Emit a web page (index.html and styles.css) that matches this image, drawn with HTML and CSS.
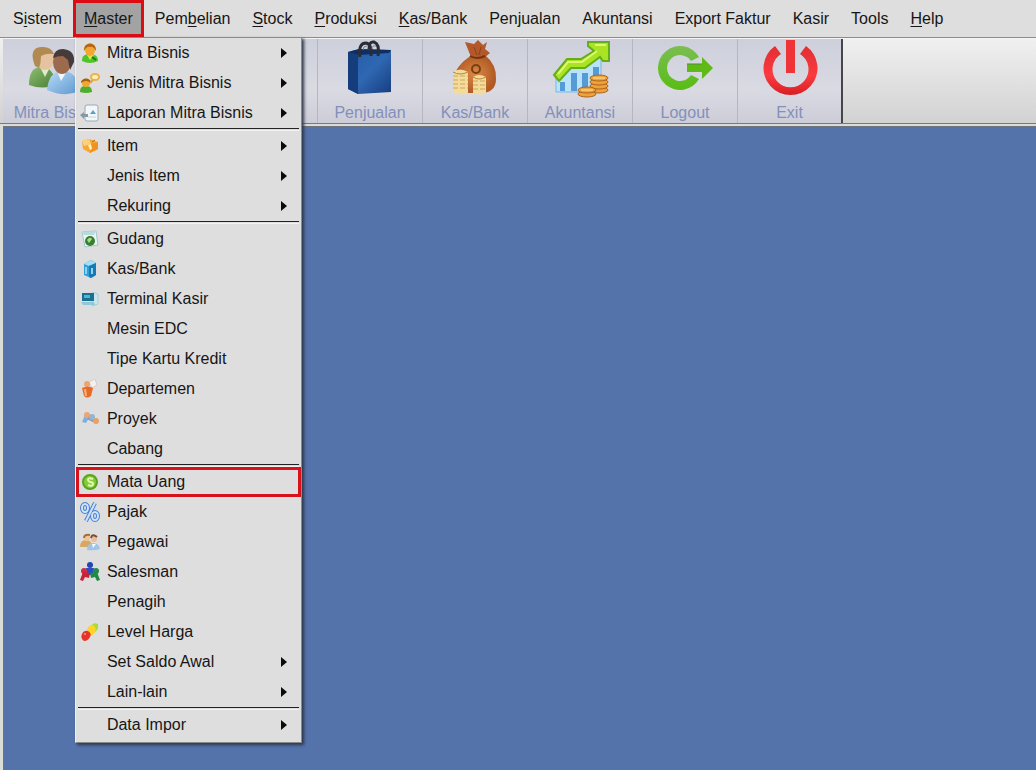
FILE: index.html
```
<!DOCTYPE html>
<html lang="id">
<head>
<meta charset="utf-8">
<meta name="viewport" content="width=device-width, initial-scale=1">
<title>Master</title>
<link rel="stylesheet" href="styles.css">
</head>
<body>

<nav class="menubar">
  <ul class="menus">
    <li><button class="menu">S<u>i</u>stem</button></li>
    <li class="open">
      <button class="menu active"><u>M</u>aster</button>
      <ul class="dropdown">
        <li><button class="entry sub">
          <svg class="icon" viewBox="0 0 20 20"><path d="M2 18c0-5 2-7 8-7s8 3 8 7q-8 4-16 0z" fill="#4fc32c"/><path d="M7 12l3 5 4-5z" fill="#d8e84a"/><ellipse cx="10" cy="7" rx="5" ry="6" fill="#f2a830"/><path d="M4 8C3-2 17-2 16 8q-3-5-6-4-3-1-6 4z" fill="#b8670f"/><path d="M12 14l4 3" stroke="#24791b" stroke-width="2"/></svg>
          Mitra Bisnis</button></li>
        <li><button class="entry sub">
          <svg class="icon" viewBox="0 0 20 20"><path d="M0 19c0-5 2-6 6-6s6 2 6 6q-6 2-12 0z" fill="#4fae2c"/><circle cx="6" cy="10" r="4" fill="#f2a830"/><path d="M1 10c0-6 10-6 10 0q-5-4-10 0z" fill="#a85e10"/><path d="M10 10l3-3" stroke="#e0a23c" stroke-width="2"/><ellipse cx="15" cy="4" rx="4" ry="3" fill="#fff0b8" stroke="#eeb04c" stroke-width="2"/></svg>
          Jenis Mitra Bisnis</button></li>
        <li><button class="entry sub">
          <svg class="icon" viewBox="0 0 20 20"><rect x="5" y="2" width="13" height="16" rx="2" fill="#f2f7fa" stroke="#9aa9b4"/><path d="M10 11l3-4 3 4z" fill="#5ba0c4"/><path d="M8 14h8" stroke="#c4d6e0"/><path d="M0 12l4-3v2h4v3H4v2z" fill="#8898a6"/></svg>
          Laporan Mitra Bisnis</button></li>
        <li class="line"></li>
        <li><button class="entry sub">
          <svg class="icon" viewBox="0 0 20 20"><path d="M2 5l7-2 9 3v7l-8 4-7-4z" fill="#f7a734"/><path d="M2 5l7-2 2 5-7 2z" fill="#ffd07a"/><path d="M11 8l7-2v7l-8 4z" fill="#f0921c"/><path d="M8 9l3-1 1 5-2 1z" fill="#fff0c4"/><path d="M12 6l3-2" stroke="#b75f10"/></svg>
          Item</button></li>
        <li><button class="entry sub"><span class="icon"></span>Jenis Item</button></li>
        <li><button class="entry sub"><span class="icon"></span>Rekuring</button></li>
        <li class="line"></li>
        <li><button class="entry">
          <svg class="icon" viewBox="0 0 20 20"><path d="M2 3l14-1 2 14-13 2z" fill="#eaf6f6" stroke="#9fc9cc"/><path d="M2 3l14-1-2 4H4z" fill="#b6dce2"/><circle cx="10" cy="12" r="5" fill="#3a7d34"/><path d="M7 11q3-4 5-1l-3 4z" fill="#a7df82"/></svg>
          Gudang</button></li>
        <li><button class="entry">
          <svg class="icon" viewBox="0 0 20 20"><path d="M4 5l7-4 5 3v12l-5 3-7-3z" fill="#2f9fd8"/><path d="M4 5l7-4 5 3-7 3z" fill="#a6def5"/><path d="M9 7l7-3v12l-5 3-2-1z" fill="#1778b4"/><path d="M6 8v7M12 9v6" stroke="#8fd3f2" stroke-width="2"/></svg>
          Kas/Bank</button></li>
        <li><button class="entry">
          <svg class="icon" viewBox="0 0 20 20"><path d="M12 3l6 2v10l-6 2z" fill="#c9e6ee" stroke="#a9cfda"/><rect x="2" y="4" width="12" height="8" fill="#1b6f8f"/><rect x="4" y="6" width="6" height="3" fill="#48b9d6"/><path d="M1 13h13l1 3H3z" fill="#8fc8d9"/></svg>
          Terminal Kasir</button></li>
        <li><button class="entry"><span class="icon"></span>Mesin EDC</button></li>
        <li><button class="entry"><span class="icon"></span>Tipe Kartu Kredit</button></li>
        <li><button class="entry">
          <svg class="icon" viewBox="0 0 20 20"><path d="M9 3l6-3 2 6-5 3z" fill="#f6f1ee" stroke="#d9cdc6"/><circle cx="7" cy="5" r="3" fill="#efa56c"/><path d="M2 9q6-3 11 0l-2 8q-4 3-7 0z" fill="#e86a26"/><path d="M5 10l1 7" stroke="#ffb27a" stroke-width="2"/></svg>
          Departemen</button></li>
        <li><button class="entry">
          <svg class="icon" viewBox="0 0 20 20"><path d="M2 13l3-7 4 3-3 5z" fill="#7fb0dc"/><circle cx="7" cy="6" r="3" fill="#e9a873"/><path d="M8 9l6 3" stroke="#8c98ac" stroke-width="3"/><circle cx="12" cy="8" r="3" fill="#95b4d4"/><circle cx="16" cy="12" r="3" fill="#e6a068"/></svg>
          Proyek</button></li>
        <li><button class="entry"><span class="icon"></span>Cabang</button></li>
        <li class="line"></li>
        <li><button class="entry marked">
          <svg class="icon" viewBox="0 0 20 20"><circle cx="10" cy="10" r="7" fill="#86cc38" stroke="#5aa41e" stroke-width="2"/><path d="M13 7q-5-2-5 1 0 1 2 2 3 0 3 2 0 3-5 1" fill="none" stroke="#dff8b4" stroke-width="2"/></svg>
          Mata Uang</button></li>
        <li><button class="entry">
          <svg class="icon" viewBox="0 0 20 20"><g fill="none" stroke="#4a82d0" stroke-width="4"><ellipse cx="5" cy="6" rx="3" ry="4"/><ellipse cx="15" cy="14" rx="3" ry="4"/><path d="M15 1L6 19"/></g><g fill="none" stroke="#cfe4ff" stroke-width="2"><ellipse cx="5" cy="6" rx="3" ry="4"/><ellipse cx="15" cy="14" rx="3" ry="4"/><path d="M15 1L6 19"/></g></svg>
          Pajak</button></li>
        <li><button class="entry">
          <svg class="icon" viewBox="0 0 20 20"><path d="M0 15q0-7 6-7t6 7z" fill="#d8a763"/><circle cx="7" cy="6" r="3" fill="#f0c690"/><path d="M4 6q0-4 6-3" fill="none" stroke="#a96c34" stroke-width="2"/><path d="M7 18q0-7 6-7t7 6q-6 2-13 1z" fill="#9fc4e6"/><circle cx="14" cy="7" r="3" fill="#f0bd94"/><path d="M11 6q1-5 6-1" fill="none" stroke="#74503e" stroke-width="2"/><path d="M12 12l1 4 3-4z" fill="#f8fbff"/></svg>
          Pegawai</button></li>
        <li><button class="entry">
          <svg class="icon" viewBox="0 0 20 20"><circle cx="10" cy="3" r="3" fill="#2346b4"/><path d="M6 6h8l-1 7H7z" fill="#2b4fc0"/><circle cx="4" cy="9" r="3" fill="#d02c40"/><path d="M0 18l3-8 7 1-1 5-4-1-2 4z" fill="#c62238"/><circle cx="16" cy="9" r="3" fill="#25884c"/><path d="M20 18l-3-8-7 1 1 5 4-1 2 4z" fill="#1f8a46"/></svg>
          Salesman</button></li>
        <li><button class="entry"><span class="icon"></span>Penagih</button></li>
        <li><button class="entry">
          <svg class="icon" viewBox="0 0 20 20"><path d="M11 4q2-4 7-2 1 5-3 8z" fill="#a4dc3c"/><path d="M7 8q1-5 6-5 4 2 2 7-2 4-6 4z" fill="#ffd428"/><path d="M2 12q2-4 6-3 4 2 2 6-2 4-6 4-4-3-2-7z" fill="#e8332a"/><circle cx="5" cy="12" r="1" fill="#ff9d8a"/></svg>
          Level Harga</button></li>
        <li><button class="entry sub"><span class="icon"></span>Set Saldo Awal</button></li>
        <li><button class="entry sub"><span class="icon"></span>Lain-lain</button></li>
        <li class="line"></li>
        <li><button class="entry sub"><span class="icon"></span>Data Impor</button></li>
      </ul>
    </li>
    <li><button class="menu">Pem<u>b</u>elian</button></li>
    <li><button class="menu"><u>S</u>tock</button></li>
    <li><button class="menu"><u>P</u>roduksi</button></li>
    <li><button class="menu"><u>K</u>as/Bank</button></li>
    <li><button class="menu">Penjualan</button></li>
    <li><button class="menu">Akuntansi</button></li>
    <li><button class="menu">Export Faktur</button></li>
    <li><button class="menu">Kasir</button></li>
    <li><button class="menu">Tools</button></li>
    <li><button class="menu"><u>H</u>elp</button></li>
  </ul>
</nav>

<div class="toolbar">
  <button class="tool">
    <svg class="picture" viewBox="0 0 60 60">
      <defs>
        <linearGradient id="shirt" x2="1" y2="1"><stop stop-color="#8fc070"/><stop offset="1" stop-color="#477c35"/></linearGradient>
        <linearGradient id="coat" x2="1" y2="1"><stop stop-color="#b9dcf6"/><stop offset="1" stop-color="#5c97cf"/></linearGradient>
      </defs>
      <path d="M4 46q0-18 12-18 13 0 15 18-13 5-27 0z" fill="url(#shirt)"/>
      <path d="M15 28l5 10 5-10z" fill="#dcecc8"/>
      <ellipse cx="20" cy="20" rx="9" ry="11" fill="#e5c3a0"/>
      <path d="M10 27Q3 9 16 8q10-1 13 7-8-1-13 2 0 7-2 12z" fill="#b08a50"/>
      <path d="M22 51q2-19 15-19 16 0 17 20-14 7-32-1z" fill="url(#coat)"/>
      <path d="M32 32l4 10 6-10z" fill="#f3f8fc"/>
      <ellipse cx="37" cy="23" rx="9" ry="12" fill="#9c6a4c"/>
      <path d="M28 19q1-9 10-9 12 1 11 13l-4 8-2-10-5-4q-6 0-10 2z" fill="#463b39"/>
    </svg>
    Mitra Bisnis</button>
  <button class="tool" aria-label="Pembelian"></button>
  <button class="tool" aria-label="Stock"></button>
  <button class="tool">
    <svg class="picture" viewBox="0 0 60 60">
      <defs><linearGradient id="bag" x2="1" y2="1"><stop stop-color="#2258a4"/><stop offset=".5" stop-color="#2f68b2"/><stop offset="1" stop-color="#173d80"/></linearGradient></defs>
      <path d="M8 13l11-3 32 1v42l-33 2-10-5z" fill="url(#bag)"/>
      <path d="M8 13l10 3v39l-10-5z" fill="#153d7c"/>
      <path d="M8 13l11-3 32 1-2 3-31 2z" fill="#0f2e62"/>
      <path d="M20 18q-2-14 6-14 6 1 5 13M29 10q0-8 5-7 6 2 4 14" fill="none" stroke="#2a2d35" stroke-width="3"/>
      <path d="M23 11q0-4 4-4M32 10q0-4 4-3" fill="none" stroke="#7a808c"/>
    </svg>
    Penjualan</button>
  <button class="tool">
    <svg class="picture" viewBox="0 0 60 60">
      <defs><radialGradient id="sack"><stop stop-color="#dc8846"/><stop offset="1" stop-color="#b05a24"/></radialGradient></defs>
      <path d="M26 18L20 3l9 2 4-4 5 5 4-3-2 7 5 4-6 5z" fill="#b2582a"/>
      <path d="M27 16h13q12 10 11 24 0 12-12 14H22Q9 52 9 39q1-12 18-23z" fill="url(#sack)"/>
      <path d="M25 17q7 4 15 0" fill="none" stroke="#713310" stroke-width="2"/>
      <path d="M29 8l3 8M36 8l-2 8" fill="none" stroke="#8a421a"/>
      <circle cx="31" cy="30" r="4" fill="none" stroke="#774012" stroke-width="2"/>
      <path d="M8 33q7-5 15 0v21q-7 3-15 0zM28 38q6-4 13 0v16q-6 3-13 0z" fill="#f3dc9b"/>
      <path d="M8 37h15M8 41h15M8 45h15M8 49h15M28 42h13M28 46h13M28 50h13" stroke="#cda55a" stroke-dasharray="5 2"/>
      <path d="M8 33q7 4 15 0M28 38q6 4 13 0" stroke="#b58536" fill="none"/>
    </svg>
    Kas/Bank</button>
  <button class="tool">
    <svg class="picture" viewBox="0 0 60 60">
      <path d="M6 34L51 18v35H6z" fill="#b9e2fb" stroke="#7ab7df"/>
      <path d="M10 43h5v9h-5zM21 34h6v18h-6zM32 34h6v18h-6zM43 28h6v16h-6z" fill="#559bd8"/>
      <path d="M4 36l13-16h14l13-8-6-5V3h21v19h-6l-3-4-15 11H21L9 42z" fill="#a9e324" stroke="#65ad19" stroke-width="2"/>
      <path d="M8 35l10-12h14l15-11M45 6h11" stroke="#dcf970" stroke-width="2" fill="none"/>
      <g fill="#eda23c" stroke="#ae6218">
        <ellipse cx="49" cy="51" rx="9" ry="3"/><ellipse cx="49" cy="47" rx="9" ry="3"/><ellipse cx="49" cy="43" rx="9" ry="3"/><ellipse cx="49" cy="39" rx="9" ry="3"/>
        <ellipse cx="37" cy="55" rx="9" ry="3"/><ellipse cx="37" cy="51" rx="9" ry="3"/>
      </g>
      <path d="M43 39h12M31 51h12" stroke="#ffe6a0"/>
    </svg>
    Akuntansi</button>
  <button class="tool">
    <svg class="picture" viewBox="0 0 60 60">
      <defs><linearGradient id="go" x2="0" y2="1"><stop stop-color="#7bbd52"/><stop offset="1" stop-color="#58bd14"/></linearGradient></defs>
      <path d="M44 18A22 22 0 1 0 44 40L36 36A13 13 0 1 1 36 22z" fill="url(#go)"/>
      <path d="M32 25h15v-7l11 11-11 11v-7H32z" fill="#5fba18"/>
      <path d="M32 25h15" stroke="#4d8f28"/>
    </svg>
    Logout</button>
  <button class="tool">
    <svg class="picture" viewBox="0 0 60 60">
      <defs><linearGradient id="off" x2="0" y2="1"><stop stop-color="#e22e32"/><stop offset=".6" stop-color="#fb3b40"/><stop offset="1" stop-color="#d81e22"/></linearGradient></defs>
      <path d="M15 7A27 27 0 1 0 46 7l-6 8A18 18 0 1 1 21 15z" fill="url(#off)"/>
      <path d="M26 1h9v33h-9z" fill="#ef3439"/>
    </svg>
    Exit</button>
</div>

<main class="desktop"></main>

</body>
</html>
```

FILE: styles.css
```
* {
  box-sizing: border-box;
}

body {
  margin: 0;
  min-height: 100vh;
  display: flex;
  flex-direction: column;
  background: #dedede;
  color: #161616;
  font-family: "Liberation Sans", Arial, sans-serif;
  font-size: 16px;
}

ul {
  margin: 0;
  padding: 0;
  list-style-type: none;
}

button {
  margin: 0;
  border: none;
  background: none;
  color: inherit;
  font: inherit;
  white-space: nowrap;
}

/* Menu bar */
.menubar {
  padding-left: 2px;
  background: #dedede;
  border-bottom: 1px solid #8c8c8c;
}

.menus {
  display: flex;
}

.menu {
  display: block;
  height: 37px;
  padding: 0 11px;
}

.menu u {
  text-underline-offset: 2px;
}

.menu.active {
  background: #a3a3a3;
  outline: 3px solid #dc0d12;
  outline-offset: -3px;
}

/* Opened menu */
.open {
  position: relative;
}

.dropdown {
  position: absolute;
  z-index: 1;
  top: 100%;
  left: 2px;
  width: 227px;
  padding-bottom: 2px;
  background: #dedede;
  border: 1px solid #8a8a8a;
  border-left-color: #f0f0f0;
  box-shadow: 2px 2px 3px #2c3548;
}

.entry {
  display: flex;
  align-items: center;
  gap: 7px;
  width: 100%;
  height: 30px;
  padding: 0 14px 0 4px;
  text-align: left;
}

.icon {
  flex: none;
  width: 20px;
  height: 20px;
}

/* Arrow of an entry that has a submenu */
.sub::after {
  content: "";
  margin-left: auto;
  border: 5px solid transparent;
  border-left: 6px solid #0a0a0a;
  border-right: none;
}

.line {
  height: 3px;
  margin: 0 2px;
  border-top: 1px solid #222;
  border-bottom: 1px solid #f2f2f2;
}

.marked {
  outline: 3px solid #d8121a;
  outline-offset: -3px;
}

/* Toolbar */
.toolbar {
  display: flex;
  padding-left: 3px;
  background: linear-gradient(#f0f0f0, #d2d2d2);
  border-top: 1px solid #f4f4f6;
  border-bottom: 1px solid #77797e;
}

.tool {
  display: flex;
  flex-direction: column;
  align-items: center;
  gap: 4px;
  width: 105px;
  padding: 0;
  background: linear-gradient(#cdcfdb, #d9dae2 60%, #cccdd8);
  border-right: 1px solid #b4b6c2;
  color: #8390ba;
  line-height: 20px;
}

.tool:last-child {
  border-right: 2px solid #44464a;
}

.picture {
  width: 60px;
  height: 60px;
}

.desktop {
  flex: 1;
  background: #5573ab;
  border-top: 2px solid #dcdcd6;
  border-left: 3px solid #dcdcd6;
  box-shadow: inset 1px 1px 0 #6d7480;
}
```
